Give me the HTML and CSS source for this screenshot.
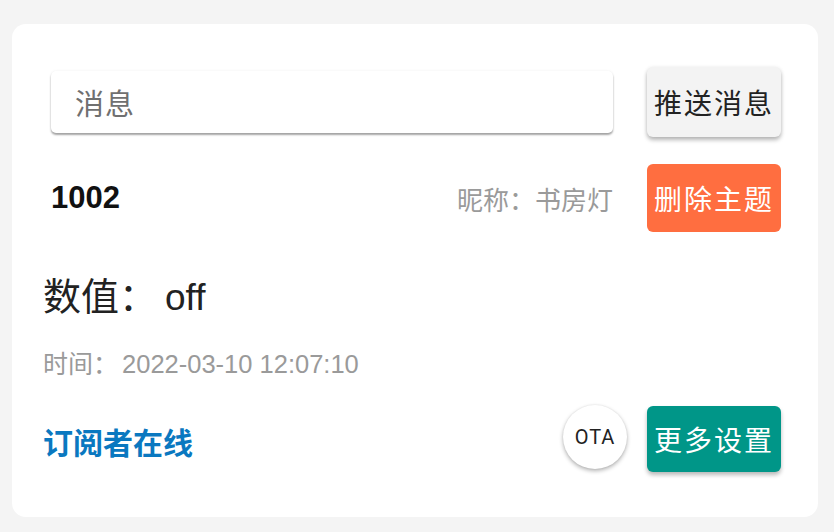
FILE: index.html
```html
<!DOCTYPE html>
<html lang="zh">
<head>
<meta charset="utf-8">
<link rel="stylesheet" href="styles.css">
</head>
<body>
<div class="card">
  <div class="row row-send">
    <div class="input"><span class="placeholder">消息</span></div>
    <button class="btn btn-light">推送消息</button>
  </div>
  <div class="row row-topic">
    <div class="topic-id">1002</div>
    <div class="nick">昵称：书房灯</div>
    <button class="btn btn-orange">删除主题</button>
  </div>
  <div class="value">数值：<span class="latin">off</span></div>
  <div class="time">时间：<span class="latin">2022-03-10 12:07:10</span></div>
  <div class="row row-bottom">
    <div class="online">订阅者在线</div>
    <div class="ota">OTA</div>
    <button class="btn btn-teal">更多设置</button>
  </div>
</div>
</body>
</html>
```
FILE: styles.css
```css
html, body {
  margin: 0;
  padding: 0;
}
body {
  background: #f4f4f4;
  padding: 24px 16px 15px 12px;
  font-family: "Noto Sans CJK SC", "Noto Sans", sans-serif;
}
.card {
  background: #fff;
  border-radius: 14px;
  height: 493px;
  box-sizing: border-box;
  padding: 43px 37px 0 31px;
}
.row {
  display: flex;
  align-items: center;
}
.row-send {
  height: 70px;
}
.input {
  margin-left: 8px;
  width: 562px;
  height: 62px;
  box-sizing: border-box;
  border-radius: 5px;
  background: #fff;
  box-shadow: 0 2px 2px rgba(0,0,0,0.35), 0 0 3px rgba(0,0,0,0.06);
  padding-left: 24px;
  display: flex;
  align-items: center;
}
.placeholder {
  font-size: 29px;
  color: #707070;
  letter-spacing: 1px;
}
.btn {
  margin-left: auto;
  width: 134px;
  border: none;
  border-radius: 6px;
  font-family: "Noto Sans CJK SC", sans-serif;
  font-size: 28px;
  letter-spacing: 2px;
  padding: 0;
  display: flex;
  align-items: center;
  justify-content: center;
}
.btn-light {
  height: 70px;
  background: #f3f3f3;
  color: #222;
  box-shadow: 0 3px 4px rgba(0,0,0,0.28), 0 0 4px rgba(0,0,0,0.06);
}
.row-topic {
  margin-top: 27px;
  height: 68px;
}
.topic-id {
  margin-left: 8px;
  font-family: "Liberation Sans", Arial, sans-serif;
  font-weight: bold;
  font-size: 31px;
  color: #111;
}
.nick {
  margin-left: auto;
  font-size: 26px;
  color: #9a9a9a;
}
.btn-orange {
  margin-left: 34px;
  height: 68px;
  background: #ff6e40;
  color: #fff;
}
.latin {
  font-family: "Liberation Sans", Arial, sans-serif;
}
.value {
  margin-top: 39px;
  font-size: 38px;
  line-height: 46px;
  color: #222;
}
.value .latin {
  font-size: 37px;
  margin-left: 8px;
}
.time {
  margin-top: 26px;
  font-size: 25px;
  line-height: 30px;
  color: #9a9a9a;
}
.time .latin {
  font-size: 25.5px;
  margin-left: 4px;
}
.row-bottom {
  margin-top: 27px;
  height: 66px;
}
.online {
  font-size: 30px;
  font-weight: bold;
  color: #0a78c0;
  margin-top: 4px;
}
.ota {
  margin-left: auto;
  width: 64px;
  height: 64px;
  border-radius: 50%;
  background: #fff;
  box-shadow: 0 2px 4px rgba(0,0,0,0.3), 0 0 2px rgba(0,0,0,0.08);
  display: flex;
  align-items: center;
  justify-content: center;
  font-family: "Roboto", "Noto Sans", sans-serif;
  font-size: 20px;
  letter-spacing: 1px;
  color: #222;
  margin-bottom: 4px;
}
.btn-teal {
  margin-left: 20px;
  height: 66px;
  background: #009688;
  color: #fff;
  box-shadow: 0 3px 4px rgba(0,0,0,0.28);
}
```
